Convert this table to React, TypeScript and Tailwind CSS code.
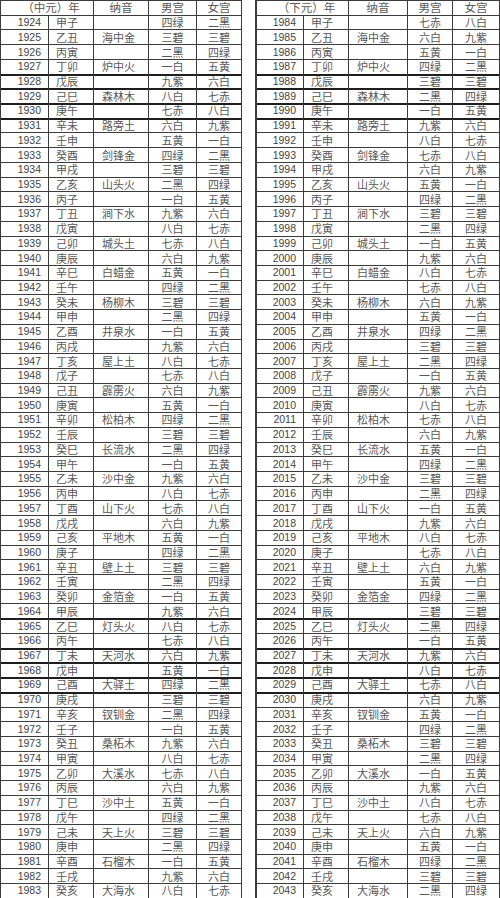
const STEMS = '甲乙丙丁戊己庚辛壬癸'
const BRANCHES = '子丑寅卯辰巳午未申酉戌亥'
const NAYIN = [
	'海中金', '炉中火', '森林木', '路旁土', '剑锋金', '山头火',
	'涧下水', '城头土', '白蜡金', '杨柳木', '井泉水', '屋上土',
	'霹雳火', '松柏木', '长流水', '沙中金', '山下火', '平地木',
	'壁上土', '金箔金', '灯头火', '天河水', '大驿土', '钗钏金',
	'桑柘木', '大溪水', '沙中土', '天上火', '石榴木', '大海水',
]
const STARS = ['一白', '二黑', '三碧', '四绿', '五黄', '六白', '七赤', '八白', '九紫']

// rows whose bottom rule came out heavier in the scan
const HEAVY = new Set([3, 4, 5, 6, 40, 42, 43, 44, 45])

const cjk = "font-['Noto_Sans_CJK_SC',sans-serif]"
const num = "font-['Liberation_Sans',Arial,sans-serif]"

type Half = {
	label: string
	startYear: number
	male: number
	female: number
	cols: string
}

const halves: Half[] = [
	{ label: '（中元）年', startYear: 1924, male: 4, female: 2, cols: 'grid-cols-[48px_45px_55px_48px_45px]' },
	{ label: '（下元）年', startYear: 1984, male: 7, female: 8, cols: 'grid-cols-[47px_45px_59px_45px_47px]' },
]

function starMale(start: number, i: number) {
	return STARS[(((start - 1 - i) % 9) + 9) % 9]
}

function starFemale(start: number, i: number) {
	return STARS[(start - 1 + i) % 9]
}

function Table({ half }: { half: Half }) {
	const cell = 'flex h-[14.72px] items-center border-r border-b border-[#3c3c3c] leading-[11px]'
	const rows = Array.from({ length: 60 }, (_, i) => i)

	return (
		<div className={`grid ${half.cols} border-l border-t border-[#3c3c3c] text-[#585858]`}>
			<div className={`${cell} ${cjk} col-span-2 justify-center pl-2 text-[11.5px]`}>{half.label}</div>
			<div className={`${cell} ${cjk} justify-center text-[11.5px]`}>纳音</div>
			<div className={`${cell} ${cjk} justify-center text-[11.5px]`}>男宫</div>
			<div className={`${cell} ${cjk} justify-center text-[11.5px]`}>女宫</div>

			{rows.map((i) => {
				const b = HEAVY.has(i) ? 'border-b-[#1e1e1e] shadow-[0_1px_0_#1e1e1e]' : ''
				return [
					<div key={`y${i}`} className={`${cell} ${b} ${num} justify-end pr-[7px] text-[10.5px] text-[#444]`}>
						{half.startYear + i}
					</div>,
					<div key={`g${i}`} className={`${cell} ${b} ${cjk} pl-[7px] text-[11px]`}>
						{STEMS[i % 10] + BRANCHES[i % 12]}
					</div>,
					<div key={`n${i}`} className={`${cell} ${b} ${cjk} pl-[8px] text-[11px]`}>
						{i % 2 === 1 ? NAYIN[(i - 1) / 2] : ''}
					</div>,
					<div key={`m${i}`} className={`${cell} ${b} ${cjk} justify-center text-[11px]`}>
						{starMale(half.male, i)}
					</div>,
					<div key={`f${i}`} className={`${cell} ${b} ${cjk} justify-center text-[11px]`}>
						{starFemale(half.female, i)}
					</div>,
				]
			})}
		</div>
	)
}

export default function App() {
	return (
		<div className="flex h-[898px] w-[500px] overflow-hidden bg-white">
			<Table half={halves[0]} />
			<div className="w-[14px] shrink-0 border-r border-[#3c3c3c]" />
			<Table half={halves[1]} />
		</div>
	)
}
